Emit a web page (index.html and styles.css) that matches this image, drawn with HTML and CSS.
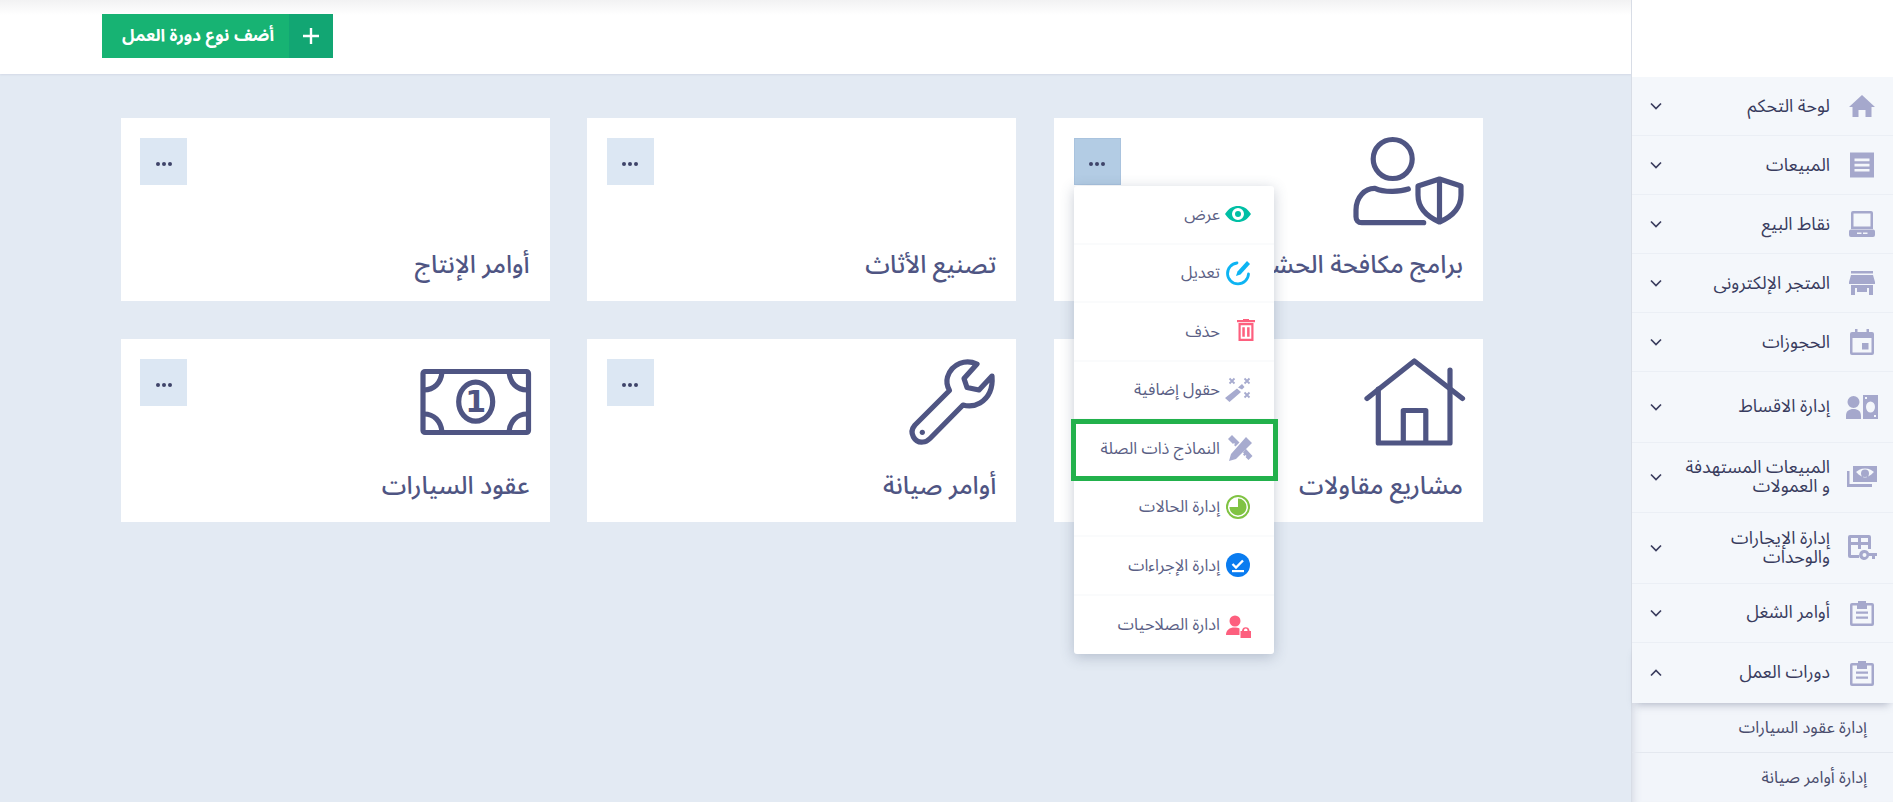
FILE: index.html
```html
<!DOCTYPE html>
<html lang="ar" dir="rtl">
<head>
<meta charset="utf-8">
<title>دورات العمل</title>
<link rel="stylesheet" href="styles.css">
</head>
<body>
<div class="app">
  <aside class="sidebar">
    <div class="brand"></div>
    <nav class="nav">
      <a class="row"><svg class="ni" viewBox="0 0 26 26"><path d="M13 2 26 14h-3.500v10h-6v-7h-7v7h-6V14H0z"/></svg><span class="lbl">لوحة التحكم</span><svg class="chev" viewBox="0 0 12 8"><path d="M1 1.500 6 6.500 11 1.500"/></svg></a>
      <a class="row"><svg class="ni" viewBox="0 0 26 26"><path fill-rule="evenodd" d="M1 0l1 1 1-1 1 1 1-1 1 1 1-1 1 1 1-1 1 1 1-1 1 1 1-1 1 1 1-1 1 1 1-1 1 1 1-1 1 1 1-1 1 1 1-1 1 1 1-1v26l-1-1-1 1-1-1-1 1-1-1-1 1-1-1-1 1-1-1-1 1-1-1-1 1-1-1-1 1-1-1-1 1-1-1-1 1-1-1-1 1-1-1-1 1-1-1-1 1zM5.500 6.500v2.700h15V6.500zm0 5.200v2.700h15v-2.700zm0 5.200v2.700h15v-2.700z"/></svg><span class="lbl">المبيعات</span><svg class="chev" viewBox="0 0 12 8"><path d="M1 1.500 6 6.500 11 1.500"/></svg></a>
      <a class="row"><svg class="ni" viewBox="0 0 26 26"><path fill-rule="evenodd" d="M4 0h18a2 2 0 0 1 2 2v16H2V2a2 2 0 0 1 2-2zm.500 2.500v13h17v-13zM2 18.500h22a2 2 0 0 1 2 2v3.500a2 2 0 0 1-2 2H2a2 2 0 0 1-2-2v-3.500a2 2 0 0 1 2-2zm6 3v1.500h4.500v-1.500zm6 0v1.500h4.500v-1.500z"/></svg><span class="lbl">نقاط البيع</span><svg class="chev" viewBox="0 0 12 8"><path d="M1 1.500 6 6.500 11 1.500"/></svg></a>
      <a class="row"><svg class="ni" viewBox="0 0 26 26"><path fill-rule="evenodd" d="M2 1h22v2.500H2zM2 5h22l2 7v2H0v-2zM2 15h22v10h-4v-7H6v7H2zm6 3h10v4H8z"/></svg><span class="lbl">المتجر الإلكترونى</span><svg class="chev" viewBox="0 0 12 8"><path d="M1 1.500 6 6.500 11 1.500"/></svg></a>
      <a class="row"><svg class="ni" viewBox="0 0 26 26"><path fill-rule="evenodd" d="M6 0h2.500v3h9V0H20v3h3a2 2 0 0 1 2 2v19a2 2 0 0 1-2 2H3a2 2 0 0 1-2-2V5a2 2 0 0 1 2-2h3zM3.500 9v14.500h19V9zM13 14h6.500v6.500H13z"/></svg><span class="lbl">الحجوزات</span><svg class="chev" viewBox="0 0 12 8"><path d="M1 1.500 6 6.500 11 1.500"/></svg></a>
      <a class="row tall"><svg class="ni wide" viewBox="0 0 32 26"><path fill-rule="evenodd" d="M7.500 2a6 6 0 1 1 0 12 6 6 0 0 1 0-12zM0 25v-3c0-5 3-7 7.500-7S15 17 15 22v3zM17 1h15v24H17zm7.500 6.500a4.500 5.500 0 1 0 0 11 4.500 5.500 0 0 0 0-11zM19 3v2h2V3zm9 18v2h2v-2z"/></svg><span class="lbl">إدارة الاقساط</span><svg class="chev" viewBox="0 0 12 8"><path d="M1 1.500 6 6.500 11 1.500"/></svg></a>
      <a class="row tall"><svg class="ni wide" viewBox="0 0 32 26"><path fill-rule="evenodd" d="M7 2h24v16H7zm12 2.500c-4.500 0-7.500 2.200-9 3.500 1.500 1.300 4.500 5 9 5s7.500-3.700 9-5c-1.500-1.300-4.500-3.500-9-3.500zm0 1a4 4 0 1 1 0 8 4 4 0 0 1 0-8z"/><path d="M1 7h2.500v13H26v3H1z"/></svg><span class="lbl">المبيعات المستهدفة<br>و العمولات</span><svg class="chev" viewBox="0 0 12 8"><path d="M1 1.500 6 6.500 11 1.500"/></svg></a>
      <a class="row tall"><svg class="ni wide" viewBox="0 0 32 26"><path fill-rule="evenodd" d="M4 0h19a2 2 0 0 1 2 2v12h-3V10h-7v4h-3v-4H5v10h8v3H4a2 2 0 0 1-2-2V2a2 2 0 0 1 2-2zm1 3v4h7V3zm10 0v4h7V3zM18.500 15a5 5 0 0 1 4.500 3h8v3h-2v3h-3v-3h-3a5 5 0 1 1-4.500-6zm0 3a2 2 0 1 0 0 4 2 2 0 0 0 0-4z"/></svg><span class="lbl">إدارة الإيجارات<br>والوحدات</span><svg class="chev" viewBox="0 0 12 8"><path d="M1 1.500 6 6.500 11 1.500"/></svg></a>
      <a class="row"><svg class="ni" viewBox="0 0 26 26"><path fill-rule="evenodd" d="M9 3V1h8v2h6a2 2 0 0 1 2 2v19a2 2 0 0 1-2 2H3a2 2 0 0 1-2-2V5a2 2 0 0 1 2-2zM3.500 5.500v18h19v-18H18V9H8V5.500zM7 11.500h12v2.200H7zm0 5h12v2.200H7z"/></svg><span class="lbl">أوامر الشغل</span><svg class="chev" viewBox="0 0 12 8"><path d="M1 1.500 6 6.500 11 1.500"/></svg></a>
      <a class="row active"><svg class="ni" viewBox="0 0 26 26"><path fill-rule="evenodd" d="M9 3V1h8v2h6a2 2 0 0 1 2 2v19a2 2 0 0 1-2 2H3a2 2 0 0 1-2-2V5a2 2 0 0 1 2-2zM3.500 5.500v18h19v-18H18V9H8V5.500zM7 11.500h12v2.200H7zm0 5h12v2.200H7z"/></svg><span class="lbl">دورات العمل</span><svg class="chev" viewBox="0 0 12 8"><path d="M1 6.500 6 1.500 11 6.500"/></svg></a>
    </nav>
    <div class="sub">
      <a class="subrow">إدارة عقود السيارات</a>
      <a class="subrow">إدارة أوامر صيانة</a>
    </div>
  </aside>
  <main class="main">
    <header class="topbar">
      <a class="add"><span class="add-ico"><svg viewBox="0 0 16 16"><path d="M8 0v16M0 8h16"/></svg></span><span class="add-txt">أضف نوع دورة العمل</span></a>
    </header>
    <section class="grid">
      <article class="card">
        <div class="card-top">
          <svg class="big" viewBox="0 0 111 88"><circle cx="39.700" cy="22" r="19.500"/><path d="M55.300 52C48 54.500 32 56 22 51.300 12 51 3 60 3 73v6.700c0 3.500 2 6 5.700 6h62"/><path d="M86.500 42 108 49v9c0 14-10 22-21.500 27C75 80 65 72 65 58v-9zM86.500 42v43"/></svg>
          <button class="more open"><svg viewBox="0 0 18 4"><circle cx="3" cy="2" r="2"/><circle cx="9" cy="2" r="2"/><circle cx="15" cy="2" r="2"/></svg></button>
        </div>
        <h3 class="title">برامج مكافحة الحشرات</h3>
        <ul class="menu">
          <li class="mi"><svg class="mic" viewBox="0 0 30 30"><path fill="#00bfa5" fill-rule="evenodd" d="M0 15C4 9 8 7 13 7s9 2 13 8c-4 6-8 8-13 8S4 21 0 15zm13-6a6 6 0 1 0 0 12 6 6 0 0 0 0-12zm0 3a3 3 0 1 1 0 6 3 3 0 0 1 0-6z"/></svg><span>عرض</span></li>
          <li class="mi"><svg class="mic" viewBox="0 0 30 30"><path fill="none" stroke="#0db4f3" stroke-width="2.800" stroke-linecap="round" d="M12 5A10.500 10.500 0 1 0 23.500 16"/><path fill="#0db4f3" d="M22 3 25 6 15.500 16.500l-4.500 1.500 1.500-4.500z"/></svg><span>تعديل</span></li>
          <li class="mi"><svg class="mic" viewBox="0 0 30 30"><path fill="#fd5f7e" fill-rule="evenodd" d="M18 4V3h6v1h6v2.200H12V4zM13.500 7h15v18h-15zm2.200 2.200v13.600h10.600V9.200zm1.600 2h2.500v9.600h-2.500zm4.800 0h2.500v9.600h-2.500z"/></svg><span>حذف</span></li>
          <li class="mi"><svg class="mic" viewBox="0 0 30 30"><path fill="#a7abcf" d="M13 12.500l4-3.500 2.500 3-2.500 2.500zM12 13.500l4 3.500L4.500 27 0 23z"/><path fill="none" stroke="#a7abcf" stroke-width="1.800" d="M4.500 3.500l5 5M9.500 3.500l-5 5M19.500 3.500l5 5M24.500 3.500l-5 5M19.500 17.500l5 5M24.500 17.500l-5 5"/></svg><span>حقول إضافية</span></li>
          <li class="mi hl"><svg class="mic" viewBox="0 0 30 30"><path fill="#a7abcf" d="M21 4l6 6L11 26l-7 2 2-7zM7 2l7.500 7.500-4 4-1.500-1.500 1-1-1-1-1 1L3 6zM21 16l6.500 7-4 4-3-3 1-1-1-1-1 1-1.500-1.500 1-1-1-1z"/></svg><span>النماذج ذات الصلة</span></li>
          <li class="mi"><svg class="mic" viewBox="0 0 30 30"><circle cx="13" cy="15" r="11" fill="none" stroke="#80c343" stroke-width="2"/><path fill="#80c343" d="M13 6.500A8.500 8.500 0 1 1 4.500 15H13z"/></svg><span>إدارة الحالات</span></li>
          <li class="mi"><svg class="mic" viewBox="0 0 30 30"><circle cx="13" cy="15" r="12" fill="#0a7cf0"/><path fill="none" stroke="#fff" stroke-width="2.400" d="M7.500 14l3.500 3.500 7-7"/><path fill="#fff" d="M7 20h12v2.200H7z"/></svg><span>إدارة الإجراءات</span></li>
          <li class="mi"><svg class="mic" viewBox="0 0 30 30"><path fill="#fd5f7e" fill-rule="evenodd" d="M10 5.500a5.500 5.500 0 1 1 0 11 5.500 5.500 0 0 1 0-11zM1 25c0-5 3.500-7.500 8.500-7.500 2 0 3.700.3 5 1V25zM15.500 21h1.500v-.5a3.800 4 0 0 1 7.500 0v.5H26v7H15.500zm3.500 0h3.500v-.5a1.700 2 0 0 0-3.500 0z"/></svg><span>ادارة الصلاحيات</span></li>
        </ul>
      </article>
      <article class="card">
        <div class="card-top">
          <span class="noicon"></span>
          <button class="more"><svg viewBox="0 0 18 4"><circle cx="3" cy="2" r="2"/><circle cx="9" cy="2" r="2"/><circle cx="15" cy="2" r="2"/></svg></button>
        </div>
        <h3 class="title">تصنيع الأثاث</h3>
      </article>
      <article class="card">
        <div class="card-top">
          <span class="noicon"></span>
          <button class="more"><svg viewBox="0 0 18 4"><circle cx="3" cy="2" r="2"/><circle cx="9" cy="2" r="2"/><circle cx="15" cy="2" r="2"/></svg></button>
        </div>
        <h3 class="title">أوامر الإنتاج</h3>
      </article>
      <article class="card">
        <div class="card-top">
          <svg class="big" viewBox="0 0 111 88"><path d="M14 40.500 61.300 3 109.500 40.500"/><path d="M25.300 31v54h71.700V12M50.300 85V52.500h22.500V85"/></svg>
          <button class="more"><svg viewBox="0 0 18 4"><circle cx="3" cy="2" r="2"/><circle cx="9" cy="2" r="2"/><circle cx="15" cy="2" r="2"/></svg></button>
        </div>
        <h3 class="title">مشاريع مقاولات</h3>
      </article>
      <article class="card">
        <div class="card-top">
          <svg class="big" viewBox="0 0 111 88"><path d="M91 6C80 1 66 5 61.500 19c-1.500 5-.5 9 2 13.500L29 67c-7 8 0 18 8 17 3 0 5-1.500 7-3.500L77 47c5 1.500 11 1.500 17-2 9-5.500 13-15 12-27L93 32l-12-2.500-3-9z"/><circle class="dot" cx="36.300" cy="74.300" r="2.600"/></svg>
          <button class="more"><svg viewBox="0 0 18 4"><circle cx="3" cy="2" r="2"/><circle cx="9" cy="2" r="2"/><circle cx="15" cy="2" r="2"/></svg></button>
        </div>
        <h3 class="title">أوامر صيانة</h3>
      </article>
      <article class="card">
        <div class="card-top">
          <svg class="big" viewBox="0 0 111 88"><rect x="3" y="13.500" width="105.500" height="61" rx="2"/><ellipse cx="55.700" cy="43.700" rx="17" ry="19.500"/><path d="M4 32c10 0 17-7 18-18M89 14c1 11 8 18 18 18M4 56c10 0 17 7 18 18M89 74c1-11 8-18 18-18"/><text class="one" x="55.700" y="54" text-anchor="middle">1</text></svg>
          <button class="more"><svg viewBox="0 0 18 4"><circle cx="3" cy="2" r="2"/><circle cx="9" cy="2" r="2"/><circle cx="15" cy="2" r="2"/></svg></button>
        </div>
        <h3 class="title">عقود السيارات</h3>
      </article>
    </section>
  </main>
</div>
</body>
</html>
```

FILE: styles.css
```css
* { box-sizing: border-box; }
html, body { margin: 0; height: 100%; overflow: hidden; }
body {
  background: #e3eaf3;
  font-family: "Noto Sans Arabic", "DejaVu Sans", "Noto Sans", sans-serif;
  color: #393c5e;
}
.app { display: flex; height: 802px; }

/* sidebar */
.sidebar {
  width: 261px;
  flex: none;
  background: #f4f7fb;
  box-shadow: -1px 0 0 #d8dde6;
  position: relative;
  z-index: 2;
}
.brand { height: 77px; background: #fff; }
.row {
  display: flex;
  align-items: center;
  height: 59px;
  padding: 0 18px 0 0;
  border-bottom: 1px solid #ebeff5;
  font-size: 17.800px;
  line-height: 19px;
  color: #393c5e;
}
.row.tall { height: 70.500px; }
.row.active { height: 60px; border-bottom: 0; box-shadow: 0 6px 8px -4px rgba(90, 100, 130, .4); position: relative; }
.ni { width: 26px; height: 26px; flex: none; fill: #a5a8cc; }
.ni.wide { width: 32px; margin-right: -3px; margin-left: -3px; }
.lbl { flex: 1; margin-right: 19px; }
.chev { width: 12px; height: 8px; flex: none; margin-left: 18px; fill: none; stroke: #393c5e; stroke-width: 1.700; }
.sub { background: #f2f5fa; box-shadow: inset 8px 0 10px -8px rgba(90, 100, 130, .25); }
.subrow {
  display: flex;
  align-items: center;
  height: 50px;
  padding-right: 26px;
  font-size: 16.600px;
  color: #4a4d6d;
  border-bottom: 1px solid #e4e8ef;
}

/* main */
.main { flex: 1; min-width: 0; }
.topbar {
  height: 74px;
  display: flex;
  justify-content: flex-end;
  align-items: flex-start;
  padding: 14px 0 0 102px;
  background: linear-gradient(#f2f2f3, #fff 15px);
  box-shadow: 0 1px 2px #d3d9e6;
}
.add { display: flex; height: 44px; background: #17b373; color: #fff; font-size: 17px; font-weight: 700; }
.add-ico { width: 44px; display: flex; align-items: center; justify-content: center; background: #12a673; }
.add-ico svg { width: 16px; height: 16px; fill: none; stroke: #fff; stroke-width: 2.400; }
.add-txt { display: flex; align-items: center; padding: 0 15px 0 20px; }

.grid {
  display: grid;
  grid-template-columns: repeat(3, 429px);
  justify-content: start;
  gap: 38px 37.700px;
  padding: 44px 149px 0 0;
}
.card {
  position: relative;
  height: 183px;
  background: #fff;
  padding: 19px 19px 0 19.500px;
}
.card-top { display: flex; justify-content: space-between; align-items: flex-start; height: 88px; }
.noicon { display: block; }
.big { width: 111px; height: 88px; fill: none; stroke: #4f5583; stroke-width: 5.200; stroke-linecap: round; stroke-linejoin: round; overflow: visible; }
.big .dot { fill: #4f5583; stroke: none; }
.big .one { fill: #4f5583; stroke: none; font: 700 30px "DejaVu Sans", sans-serif; }
.more {
  width: 47px;
  height: 47px;
  margin-top: 1px;
  padding: 4px 0 0;
  border: 0;
  background: #dce7f3;
  display: flex;
  align-items: center;
  justify-content: center;
}
.more svg { width: 18px; height: 4px; fill: #3f4469; }
.more.open { background: #b3cce4; box-shadow: inset 0 0 0 1px #a9c3de; }
.title {
  margin: 25px 0 0;
  padding-right: 1px;
  font-size: 24.800px;
  line-height: 30px;
  font-weight: 500;
  color: #4f5583;
}

/* dropdown */
.menu {
  position: absolute;
  z-index: 5;
  top: 68px;
  left: 20px;
  width: 200px;
  margin: 0;
  padding: 0;
  list-style: none;
  background: #fff;
  border-radius: 3px;
  box-shadow: 0 3px 14px rgba(70, 85, 115, .3);
}
.mi {
  position: relative;
  height: 58.500px;
  display: flex;
  align-items: center;
  gap: 5px;
  padding-right: 19px;
  font-size: 16.400px;
  color: #5b5f85;
  border-bottom: 2px solid #fafbfc;
}
.mi:last-child { border-bottom: 0; }
.mic { width: 30px; height: 30px; flex: none; }
.mi.hl::after {
  content: "";
  box-sizing: border-box;
  position: absolute;
  top: -1px;
  left: -3px;
  right: -4px;
  height: 62px;
  border: 5px solid #22b14c;
  pointer-events: none;
}
```
